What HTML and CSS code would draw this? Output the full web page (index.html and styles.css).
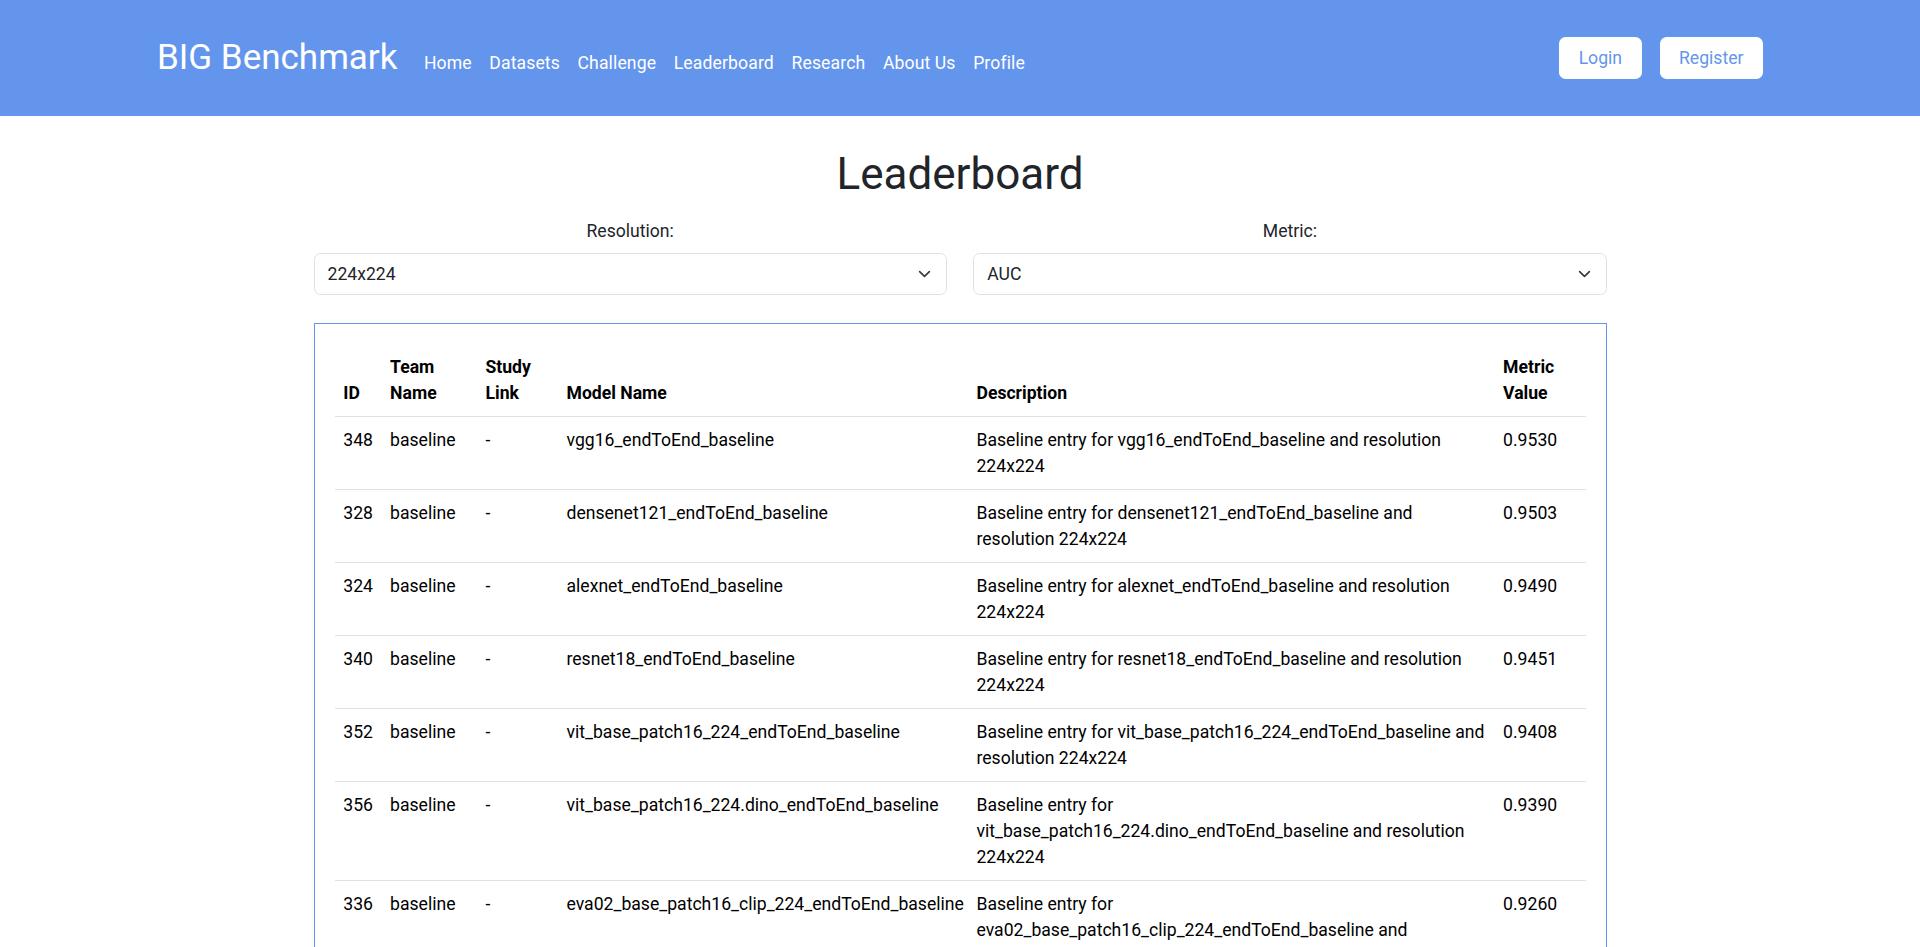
FILE: index.html
```html
<!DOCTYPE html>
<html lang="en">
<head>
<meta charset="utf-8">
<title>Leaderboard - BIG Benchmark</title>
<link rel="stylesheet" href="styles.css">
</head>
<body>
<header class="navbar">
  <div class="nav-left">
    <a class="brand" href="#">BIG Benchmark</a>
    <nav class="nav-links">
      <a class="nav-link" href="#">Home</a>
      <a class="nav-link" href="#">Datasets</a>
      <a class="nav-link" href="#">Challenge</a>
      <a class="nav-link" href="#">Leaderboard</a>
      <a class="nav-link" href="#">Research</a>
      <a class="nav-link" href="#">About Us</a>
      <a class="nav-link" href="#">Profile</a>
    </nav>
  </div>
  <div class="nav-right">
    <button class="btn">Login</button>
    <button class="btn">Register</button>
  </div>
</header>
<main class="main">
  <h1 class="title">Leaderboard</h1>
  <div class="filters">
    <div class="filter">
      <label class="filter-label" for="res">Resolution:</label>
      <div class="select-wrap">
        <select class="select" id="res"><option>224x224</option></select>
        <svg class="chev" viewBox="0 0 16 16" width="13" height="13"><path d="m2 5 6 6 6-6" fill="none" stroke="#343a40" stroke-width="2" stroke-linecap="round" stroke-linejoin="round"/></svg>
      </div>
    </div>
    <div class="filter">
      <label class="filter-label" for="met">Metric:</label>
      <div class="select-wrap">
        <select class="select" id="met"><option>AUC</option></select>
        <svg class="chev" viewBox="0 0 16 16" width="13" height="13"><path d="m2 5 6 6 6-6" fill="none" stroke="#343a40" stroke-width="2" stroke-linecap="round" stroke-linejoin="round"/></svg>
      </div>
    </div>
  </div>
  <div class="board">
    <table class="lb-table">
      <colgroup>
        <col class="col-id">
        <col class="col-team">
        <col class="col-study">
        <col class="col-model">
        <col class="col-desc">
        <col class="col-metric">
      </colgroup>
      <thead>
        <tr>
          <th>ID</th>
          <th>Team Name</th>
          <th>Study Link</th>
          <th>Model Name</th>
          <th>Description</th>
          <th>Metric Value</th>
        </tr>
      </thead>
      <tbody>
        <tr><td>348</td><td>baseline</td><td>-</td><td>vgg16_endToEnd_baseline</td><td>Baseline entry for vgg16_endToEnd_baseline and resolution 224x224</td><td>0.9530</td></tr>
        <tr><td>328</td><td>baseline</td><td>-</td><td>densenet121_endToEnd_baseline</td><td>Baseline entry for densenet121_endToEnd_baseline and resolution 224x224</td><td>0.9503</td></tr>
        <tr><td>324</td><td>baseline</td><td>-</td><td>alexnet_endToEnd_baseline</td><td>Baseline entry for alexnet_endToEnd_baseline and resolution 224x224</td><td>0.9490</td></tr>
        <tr><td>340</td><td>baseline</td><td>-</td><td>resnet18_endToEnd_baseline</td><td>Baseline entry for resnet18_endToEnd_baseline and resolution 224x224</td><td>0.9451</td></tr>
        <tr><td>352</td><td>baseline</td><td>-</td><td>vit_base_patch16_224_endToEnd_baseline</td><td>Baseline entry for vit_base_patch16_224_endToEnd_baseline and resolution 224x224</td><td>0.9408</td></tr>
        <tr><td>356</td><td>baseline</td><td>-</td><td>vit_base_patch16_224.dino_endToEnd_baseline</td><td>Baseline entry for vit_base_patch16_224.dino_endToEnd_baseline and resolution 224x224</td><td>0.9390</td></tr>
        <tr><td>336</td><td>baseline</td><td>-</td><td>eva02_base_patch16_clip_224_endToEnd_baseline</td><td>Baseline entry for eva02_base_patch16_clip_224_endToEnd_baseline and resolution 224x224</td><td>0.9260</td></tr>
      </tbody>
    </table>
  </div>
</main>
</body>
</html>
```

FILE: styles.css
```css
* {
  box-sizing: border-box;
}

body {
  margin: 0;
  font-family: Roboto, "Noto Sans", "Liberation Sans", sans-serif;
  font-size: 17.6px;
  line-height: 1.5;
  color: #212529;
  background: #fff;
}

.navbar {
  display: flex;
  align-items: center;
  justify-content: space-between;
  height: 116px;
  padding: 0 157px;
  background: #6495ed;
}

.nav-left {
  display: flex;
  align-items: baseline;
}

.brand {
  font-size: 35px;
  line-height: 1.5;
  color: #fff;
  text-decoration: none;
  margin-right: 17.6px;
}

.nav-links {
  display: flex;
}

.nav-link {
  color: #fff;
  text-decoration: none;
  padding: 0 8.8px;
  letter-spacing: 0.12px;
}

.nav-right {
  display: flex;
  gap: 18px;
}

.btn {
  font: inherit;
  line-height: 26.4px;
  background: #fff;
  color: #6495ed;
  border: 0;
  border-radius: 6.6px;
  padding: 7.8px 19.5px;
}

.main {
  width: 1293px;
  margin: 0 auto;
  padding-top: 32px;
}

.title {
  font-size: 44px;
  font-weight: 400;
  line-height: 1.2;
  text-align: center;
  margin: 0 0 17.5px;
}

.filters {
  display: grid;
  grid-template-columns: 1fr 1fr;
  column-gap: 26.4px;
  margin-bottom: 28px;
}

.filter-label {
  display: block;
  text-align: center;
  margin-bottom: 8.8px;
}

.select-wrap {
  position: relative;
}

.select {
  display: block;
  width: 100%;
  height: 42px;
  font: inherit;
  color: #212529;
  background: #fff;
  border: 1px solid #dee2e6;
  border-radius: 6.6px;
  padding: 0 40px 0 13px;
  appearance: none;
  -webkit-appearance: none;
}

.chev {
  position: absolute;
  right: 16px;
  top: 50%;
  transform: translateY(-50%);
  pointer-events: none;
}

.board {
  border: 1px solid #6495ed;
  padding: 20px;
}

.lb-table {
  width: 100%;
  table-layout: fixed;
  border-collapse: collapse;
  color: #000;
  line-height: 26px;
}

.col-id { width: 46.8px; }
.col-team { width: 95.4px; }
.col-study { width: 81px; }
.col-model { width: 410px; }
.col-desc { width: 526.6px; }
.col-metric { width: 91.2px; }

.lb-table th,
.lb-table td {
  padding: 10px 8.8px;
  border-bottom: 1px solid #dee2e6;
  text-align: left;
}

.lb-table th {
  font-weight: 700;
  vertical-align: bottom;
}

.lb-table td {
  vertical-align: top;
  overflow-wrap: normal;
}
```
